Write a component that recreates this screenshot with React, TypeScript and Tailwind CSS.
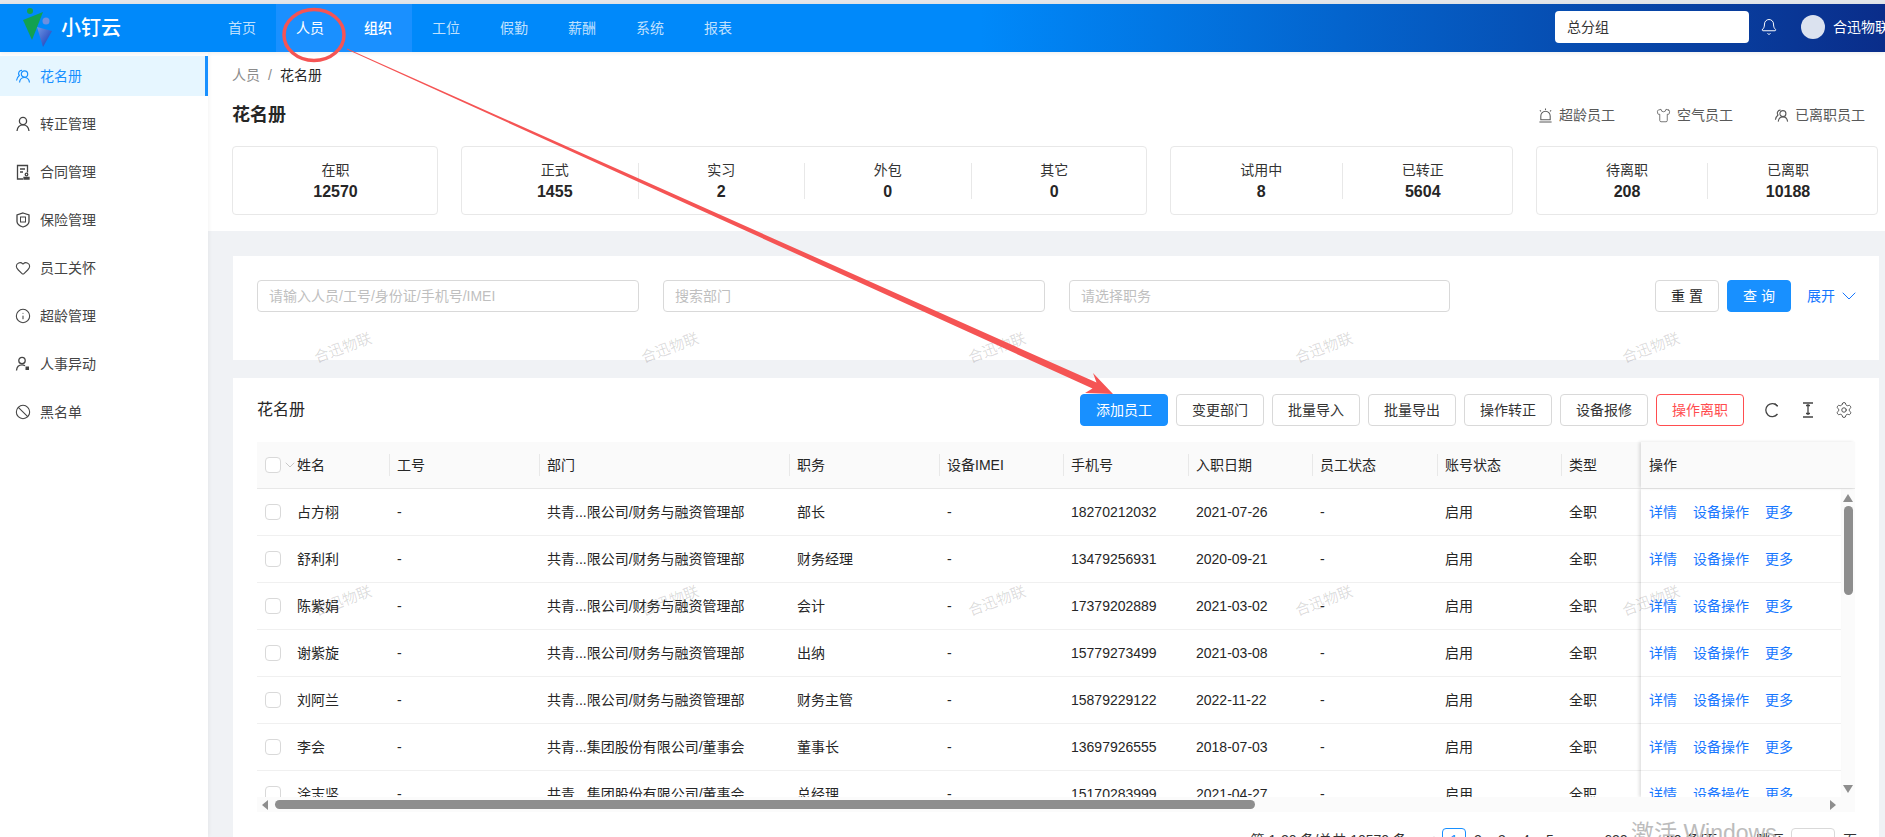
import React from "react";
import { Bell, ChevronDown, ChevronLeft, ChevronRight, Heart, Info, Ban, Settings, Shirt } from "lucide-react";

const Pair = ({ c = "currentColor", s = 16 }: { c?: string; s?: number }) => (
  <svg width={s} height={s} viewBox="0 0 16 16" fill="none" stroke={c} strokeWidth="1.2">
    <circle cx="9.5" cy="6" r="3.2" />
    <path d="M4.5 14.5c.4-3 2.4-5 5-5s4.600 2 5 5" />
    <path d="M7 2.300A3.200 3.200 0 0 0 4.300 7.500c-1.500 1.200-2.500 3-2.800 5" />
  </svg>
);
const UserIcon = () => (
  <svg width="16" height="16" viewBox="0 0 16 16" fill="none" stroke="#444" strokeWidth="1.3">
    <circle cx="8" cy="5" r="3.600" />
    <path d="M2 15c.3-3.600 2.800-6.200 6-6.200s5.700 2.600 6 6.200" />
  </svg>
);
const DocIcon = () => (
  <svg width="16" height="16" viewBox="0 0 16 16" fill="none" stroke="#444" strokeWidth="1.3">
    <path d="M8 15H2.500V1.500h10v7" />
    <path d="M5 5h5M5 8h3" />
    <circle cx="11.500" cy="10.500" r="1.300" />
    <path d="M9 15v-1.500h5V15z" />
  </svg>
);
const ShieldIcon = () => (
  <svg width="16" height="16" viewBox="0 0 16 16" fill="none" stroke="#444" strokeWidth="1.3">
    <path d="M8 1l6 2v6.500c0 2.500-3 4.500-6 5.500-3-1-6-3-6-5.500V3z" />
    <rect x="5.500" y="5" width="5" height="5" strokeWidth="1" />
  </svg>
);
const UserMoveIcon = () => (
  <svg width="16" height="16" viewBox="0 0 16 16" fill="none" stroke="#444" strokeWidth="1.3">
    <circle cx="7" cy="4.500" r="3.200" />
    <path d="M1.500 14.500c.3-3.400 2.500-5.700 5.500-5.700 1.200 0 2.200.4 3 1" />
    <rect x="10.500" y="10.500" width="3.500" height="3.500" fill="#444" stroke="none" />
  </svg>
);
const AlarmIcon = () => (
  <svg width="15" height="15" viewBox="0 0 16 16" fill="none" stroke="#595959" strokeWidth="1.1">
    <path d="M3 12.500V8.500a5 5 0 0 1 10 0v4z" />
    <path d="M1.500 15h13M8 .500v1.500M2 2.500l1.200 1.200M14 2.500l-1.200 1.200" />
  </svg>
);
const RefreshIcon = () => (
  <svg width="16" height="16" viewBox="0 0 16 16" fill="none" stroke="#444" strokeWidth="1.3">
    <path d="M13.500 4.200A6.500 6.500 0 1 0 13.500 12" />
    <path d="M10.500 1.500l3.200 2.800" />
  </svg>
);
const HeightIcon = () => (
  <svg width="16" height="16" viewBox="0 0 16 16" fill="none" stroke="#444" strokeWidth="1.3">
    <path d="M3 1h10M3 15h10M8 2v11" />
    <path d="M6 3.500h4M6 11.500h4" />
  </svg>
);

const sideItems: [string, React.ReactNode][] = [
  ["转正管理", <UserIcon />],
  ["合同管理", <DocIcon />],
  ["保险管理", <ShieldIcon />],
  ["员工关怀", <Heart size={16} strokeWidth={1.6} color="#444" />],
  ["超龄管理", <Info size={16} strokeWidth={1.6} color="#444" />],
  ["人事异动", <UserMoveIcon />],
  ["黑名单", <Ban size={16} strokeWidth={1.6} color="#444" />],
];

const navItems = ["首页", "人员", "组织", "工位", "假勤", "薪酬", "系统", "报表"];
const rows = [
  ["占方栩", "共青...限公司/财务与融资管理部", "部长", "18270212032", "2021-07-26"],
  ["舒利利", "共青...限公司/财务与融资管理部", "财务经理", "13479256931", "2020-09-21"],
  ["陈紫娟", "共青...限公司/财务与融资管理部", "会计", "17379202889", "2021-03-02"],
  ["谢紫旋", "共青...限公司/财务与融资管理部", "出纳", "15779273499", "2021-03-08"],
  ["刘阿兰", "共青...限公司/财务与融资管理部", "财务主管", "15879229122", "2022-11-22"],
  ["李会", "共青...集团股份有限公司/董事会", "董事长", "13697926555", "2018-07-03"],
  ["涂志坚", "共青...集团股份有限公司/董事会", "总经理", "15170283999", "2021-04-27"],
];
const headCols: [string, string][] = [
  ["工号", "w-[150px]"],
  ["部门", "w-[250px]"],
  ["职务", "w-[150px]"],
  ["设备IMEI", "w-[124px]"],
  ["手机号", "w-[125px]"],
  ["入职日期", "w-[124px]"],
  ["员工状态", "w-[125px]"],
  ["账号状态", "w-[124px]"],
  ["类型", "w-[80px]"],
];

const Stat = ({ label, value, first }: { label: string; value: string; first?: boolean }) => (
  <div className={`flex-1 h-[36px] flex flex-col items-center ${first ? "" : "border-l border-[#e8e8e8]"}`}>
    <span className="text-[14px] leading-[14px] text-[#333]">{label}</span>
    <span className="mt-[6px] text-[16px] leading-[18px] font-bold text-[#262626]">{value}</span>
  </div>
);
const StatCard = ({ w, items }: { w: string; items: [string, string][] }) => (
  <div className={`${w} h-[69px] border border-[#e8e8e8] rounded flex items-center pl-[10px] pr-[9px]`}>
    {items.map(([l, v], i) => (
      <Stat key={l} label={l} value={v} first={i === 0} />
    ))}
  </div>
);
const Btn = ({ children, cls = "" }: { children: React.ReactNode; cls?: string }) => (
  <button className={`h-8 rounded-sm border text-[14px] ${cls}`}>{children}</button>
);
const Check = () => <span className="block w-4 h-4 border border-[#d9d9d9] rounded-sm bg-white shrink-0" />;

export default function App() {
  return (
    <div className="relative w-[1885px] h-[837px] overflow-hidden bg-white text-[#262626] font-['Liberation_Sans','Noto_Sans_CJK_SC',sans-serif]">
      <div className="h-1 bg-[#e3e6ea]" />
      <header className="relative z-10 h-12 flex items-center bg-[linear-gradient(90deg,#0089fa_52%,#0a2d8a_100%)] text-white shadow-[0_1px_4px_rgba(0,0,0,0.08)]">
        <div className="w-[208px] shrink-0 h-full flex items-center pl-[23px] gap-2">
          <svg width="30" height="40" viewBox="0 0 30 40" className="mt-[-1px]">
            <defs>
              <linearGradient id="lg" x1="0" y1="0" x2="1" y2="1">
                <stop offset="0" stopColor="#6f97e6" />
                <stop offset="1" stopColor="#1436b4" />
              </linearGradient>
            </defs>
            <circle cx="7" cy="3" r="3" fill="#16a34a" />
            <path d="M0 12L20 4 9 32z" fill="#12a150" />
            <circle cx="23" cy="13" r="3.500" fill="#6d8fe0" />
            <path d="M14 19L29 23 20 39z" fill="url(#lg)" />
          </svg>
          <span className="text-[20px] leading-none font-medium">小钉云</span>
        </div>
        <nav className="flex h-full">
          {navItems.map((n) => (
            <div
              key={n}
              className={`w-[68px] h-full flex items-center justify-center text-[14px] ${
                n === "人员" || n === "组织" ? "bg-[#1a90ff] text-white" : "text-white/75"
              } ${n === "组织" ? "font-medium" : ""}`}
            >
              {n}
            </div>
          ))}
        </nav>
        <div className="ml-auto w-[331px] pl-[1px] pb-[2px] shrink-0 flex items-center overflow-hidden">
          <div className="w-[194px] h-8 bg-white rounded-sm text-[#333] text-[14px] leading-8 pl-3 shrink-0">总分组</div>
          <Bell size={18} strokeWidth={1.3} className="ml-[11px] shrink-0" />
          <span className="ml-[23px] w-6 h-6 rounded-full bg-[#dbe2ef] shrink-0" />
          <span className="ml-2 text-[14px] whitespace-nowrap">合迅物联科技</span>
        </div>
      </header>
      <div className="flex h-[785px]">
        <aside className="relative z-[1] w-[208px] shrink-0 bg-white pt-1 flex flex-col gap-2 shadow-[1px_0_4px_rgba(0,0,0,0.05)]">
          <div className="h-10 flex items-center pl-[15px] gap-[9px] bg-[#e6f6ff] border-r-[3px] border-[#1890ff] text-[#1890ff] text-[14px]">
            <Pair />
            花名册
          </div>
          {sideItems.map(([t, ic]) => (
            <div key={t} className="h-10 flex items-center pl-[15px] gap-[9px] text-[#444] text-[14px]">
              {ic}
              {t}
            </div>
          ))}
        </aside>
        <main className="flex-1 min-w-0 bg-[#f0f2f5]">
          <section className="h-[179px] bg-white pl-6 pr-[6px]">
            <div className="h-12 pb-[2px] flex items-center text-[14px] gap-2">
              <span className="text-[#8c8c8c]">人员</span>
              <span className="text-[#8c8c8c]">/</span>
              <span>花名册</span>
            </div>
            <div className="h-[30px] mb-4 flex items-center justify-between">
              <h1 className="text-[18px] font-bold text-[#262626]">花名册</h1>
              <div className="flex items-center text-[14px] text-[#595959] pr-[14px] gap-[41px]">
                <span className="flex items-center gap-[6px]"><AlarmIcon />超龄员工</span>
                <span className="flex items-center gap-[6px]"><Shirt size={15} strokeWidth={1.3} />空气员工</span>
                <span className="flex items-center gap-[6px]"><Pair c="#595959" s={15} />已离职员工</span>
              </div>
            </div>
            <div className="flex gap-[23px]">
              <StatCard w="w-[206px]" items={[["在职", "12570"]]} />
              <StatCard w="w-[686px]" items={[["正式", "1455"], ["实习", "2"], ["外包", "0"], ["其它", "0"]]} />
              <StatCard w="w-[343px]" items={[["试用中", "8"], ["已转正", "5604"]]} />
              <StatCard w="w-[342px]" items={[["待离职", "208"], ["已离职", "10188"]]} />
            </div>
          </section>
          <section className="ml-[25px] mr-[6px] mt-[25px] h-[104px] bg-white pt-6 pl-6 pr-6 flex items-start text-[14px]">
            <input readOnly placeholder="请输入人员/工号/身份证/手机号/IMEI" className="w-[382px] h-8 px-[11px] border border-[#d9d9d9] rounded-sm placeholder:text-[#bfbfbf] outline-none" />
            <input readOnly placeholder="搜索部门" className="ml-6 w-[382px] h-8 px-[11px] border border-[#d9d9d9] rounded-sm placeholder:text-[#bfbfbf] outline-none" />
            <input readOnly placeholder="请选择职务" className="ml-6 w-[381px] h-8 px-[11px] border border-[#d9d9d9] rounded-sm placeholder:text-[#bfbfbf] outline-none" />
            <Btn cls="ml-auto w-[64px] border-[#d9d9d9]">重 置</Btn>
            <Btn cls="ml-2 w-[64px] border-[#1890ff] bg-[#1890ff] text-white">查 询</Btn>
            <span className="ml-4 -mr-[6px] h-8 flex items-center gap-[2px] text-[#1677ff]">展开<ChevronDown size={24} strokeWidth={1} /></span>
          </section>
          <section className="ml-[25px] mr-[6px] mt-[18px] h-[459px] bg-white pt-4 pl-6 pr-6 text-[14px]">
            <div className="h-8 flex items-center">
              <span className="text-[16px] mr-auto">花名册</span>
              <div className="flex items-center gap-2">
                <Btn cls="w-[88px] border-[#1890ff] bg-[#1890ff] text-white">添加员工</Btn>
                {["变更部门", "批量导入", "批量导出", "操作转正", "设备报修"].map((b) => (
                  <Btn key={b} cls="w-[88px] border-[#d9d9d9] text-[#333]">{b}</Btn>
                ))}
                <Btn cls="w-[88px] border-[#ff4d4f] text-[#ff4d4f]">操作离职</Btn>
              </div>
              <div className="flex items-center gap-5 ml-5 mr-[2px]">
                <RefreshIcon />
                <HeightIcon />
                <Settings size={18} strokeWidth={1.2} color="#444" className="-ml-[1px]" />
              </div>
            </div>
            <div className="mt-4 w-[1598px]">
              <div className="flex h-[47px] bg-[#fafafa] border-b border-[#e8e8e8]">
                <div className="w-[132px] flex items-center pl-2">
                  <Check />
                  <ChevronDown size={16} strokeWidth={1.2} color="#bbb" className="ml-[1px]" />
                  <span className="-ml-[1px]">姓名</span>
                </div>
                {headCols.map(([h, w]) => (
                  <div key={h} className={`${w} flex items-center`}>
                    <span className="h-[22px] leading-[22px] border-l border-[#e8e8e8] pl-[7px]">{h}</span>
                  </div>
                ))}
                <div className="relative flex-1 flex items-center pl-2 shadow-[-2px_0_3px_rgba(0,0,0,0.12)]">操作</div>
              </div>
              <div className="flex h-[308px] overflow-hidden">
                <div className="w-[1384px] shrink-0">
                  {rows.map((r) => (
                    <div key={r[0]} className="flex h-[47px] border-b border-[#f0f0f0] items-stretch">
                      <div className="w-[132px] flex items-center pl-2"><Check /><span className="ml-4">{r[0]}</span></div>
                      <div className="w-[150px] flex items-center pl-2">-</div>
                      <div className="w-[250px] flex items-center pl-2">{r[1]}</div>
                      <div className="w-[150px] flex items-center pl-2">{r[2]}</div>
                      <div className="w-[124px] flex items-center pl-2">-</div>
                      <div className="w-[125px] flex items-center pl-2">{r[3]}</div>
                      <div className="w-[124px] flex items-center pl-2">{r[4]}</div>
                      <div className="w-[125px] flex items-center pl-2">-</div>
                      <div className="w-[124px] flex items-center pl-2">启用</div>
                      <div className="w-[80px] flex items-center pl-2">全职</div>
                    </div>
                  ))}
                </div>
                <div className="relative w-[200px] shrink-0 shadow-[-2px_0_3px_rgba(0,0,0,0.12)]">
                  {rows.map((r) => (
                    <div key={r[0]} className="h-[47px] border-b border-[#f0f0f0] flex items-center pl-2 gap-4 text-[#1677ff]">
                      <span>详情</span><span>设备操作</span><span>更多</span>
                    </div>
                  ))}
                </div>
                <div className="flex-1 bg-[#fbfbfb] flex flex-col items-center pt-[5px] pb-[4px] justify-between">
                  <div className="flex flex-col items-center w-full">
                    <span className="w-0 h-0 border-x-[5px] border-x-transparent border-b-[8px] border-b-[#8e8e8e]" />
                    <span className="mt-1 w-[9px] h-[89px] rounded-full bg-[#8e8e8e]" />
                  </div>
                  <span className="w-0 h-0 border-x-[5px] border-x-transparent border-t-[8px] border-t-[#8e8e8e]" />
                </div>
              </div>
              <div className="h-[15px] bg-[#fbfbfb] flex items-center pl-[5px] pr-[19px]">
                <span className="w-0 h-0 border-y-[5px] border-y-transparent border-r-[6px] border-r-[#8e8e8e]" />
                <span className="ml-[7px] w-[980px] h-[9px] rounded-full bg-[#8e8e8e]" />
                <span className="ml-auto w-0 h-0 border-y-[5px] border-y-transparent border-l-[6px] border-l-[#8e8e8e]" />
              </div>
              <div className="mt-4 flex items-center justify-end h-6 text-[#333] -mr-[2px]">
                <span className="mr-[19px]">第 1-20 条/总共 10570 条</span>
                <ChevronLeft size={12} color="#999" className="mr-1" />
                <span className="w-6 h-6 border border-[#1890ff] text-[#1890ff] rounded-sm text-center leading-[22px]">1</span>
                {["2", "3", "4", "5", "•••", "629"].map((p, i) => (
                  <span key={p} className={`${i === 5 ? "w-[40px]" : i === 4 ? "w-[34px]" : "w-6"} text-center`}>{p}</span>
                ))}
                <ChevronRight size={12} color="#999" className="ml-1 mr-[14px]" />
                <span className="w-[90px]">20 条/页</span>
                <span className="w-[35px]">跳至</span>
                <span className="w-[44px] h-8 border border-[#d9d9d9] rounded-sm mt-2" />
                <span className="ml-2">页</span>
              </div>
            </div>
          </section>
        </main>
      </div>

      <div className="absolute left-[180px] top-[222px] z-20 grid grid-cols-[repeat(5,327px)] auto-rows-[253px] pointer-events-none">
        {Array.from({ length: 10 }).map((_, i) => (
          <div key={i} className="flex items-center justify-center">
            <span className="-rotate-[20deg] text-[15px] text-black/15">合迅物联</span>
          </div>
        ))}
      </div>

      <svg className="absolute left-0 top-0 z-30 pointer-events-none" width="1885" height="837" fill="none">
        <ellipse cx="314" cy="35" rx="30" ry="25.500" stroke="#f55454" strokeWidth="3.500" />
        <path d="M347 48.500L1096.500 382.500 1093 373 1113 394 1085 393 1092.500 388.500 347 49.500z" fill="#f55454" />
      </svg>

      <div className="absolute left-[1631px] top-[818px] z-30 text-[23px] leading-[30px] text-[#bcbcbc] whitespace-nowrap">激活 Windows</div>
    </div>
  );
}
